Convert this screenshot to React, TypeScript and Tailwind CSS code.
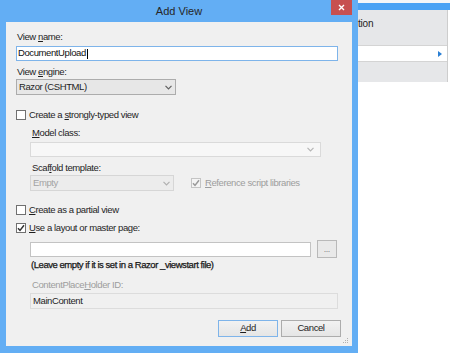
import React from 'react';

const font = { fontFamily: '"Liberation Sans", Arial, sans-serif' };

function Check({ checked = false, disabled = false }: { checked?: boolean; disabled?: boolean }) {
  return (
    <span
      className={`w-[10px] h-[10px] shrink-0 border flex items-center justify-center ${
        disabled ? 'border-[#c4c4c4] bg-[#f4f4f4]' : 'border-[#707070] bg-white'
      }`}
    >
      {checked && (
        <svg width="8" height="8" viewBox="0 0 8 8">
          <path d="M1 4.2 L3 6.4 L7 1.2" fill="none" stroke={disabled ? '#9a9a9a' : '#333'} strokeWidth="1.5" />
        </svg>
      )}
    </span>
  );
}

function Chevron({ color = '#606060' }: { color?: string }) {
  return (
    <svg width="7" height="5" viewBox="0 0 7 5" className="shrink-0">
      <path d="M0.5 0.8 L3.5 3.8 L6.5 0.8" fill="none" stroke={color} strokeWidth="1.2" />
    </svg>
  );
}

function Label({ children, muted = false, className = '' }: { children: React.ReactNode; muted?: boolean; className?: string }) {
  return (
    <div className={`h-[12px] leading-[12px] text-[9.5px] tracking-[-0.4px] whitespace-nowrap ${muted ? 'text-[#9d9d9d]' : 'text-[#1e1e1e]'} ${className}`}>
      {children}
    </div>
  );
}

export default function App() {
  return (
    <div className="w-[450px] h-[353px] flex bg-white overflow-hidden" style={font}>
      {/* dialog window */}
      <div className="w-[358px] h-[353px] shrink-0 bg-[#63aef4] flex flex-col">
        <div className="h-[22px] relative flex items-center justify-center">
          <span className="text-[11px] text-[#262626] leading-none">Add View</span>
          <div className="absolute right-[6px] top-0 w-[21px] h-[15px] bg-[#c75050] flex items-center justify-center">
            <svg width="7" height="7" viewBox="0 0 7 7">
              <path d="M1 1 L6 6 M6 1 L1 6" stroke="#fff" strokeWidth="1.4" />
            </svg>
          </div>
        </div>

        <div className="mx-[6px] h-[324px] bg-[#f0f0f0] pl-[10px] pt-[9px] flex flex-col relative">
          <Label className="pl-[1px]">View <u className="underline-offset-1">n</u>ame:</Label>
          <div className="mt-[3px] w-[322px] h-[15px] bg-white border border-[#7eb4ea] flex items-center pl-[1px] text-[9.5px] tracking-[-0.4px] text-[#111]">
            DocumentUpload<span className="w-px h-[10px] bg-black ml-[1px]" />
          </div>

          <Label className="mt-[5px] pl-[1px]">View <u className="underline-offset-1">e</u>ngine:</Label>
          <div className="mt-[1px] w-[160px] h-[16px] bg-[#e7e7e7] border border-[#acacac] flex items-center justify-between pl-[2px] pr-[3px] text-[9.5px] tracking-[-0.4px] text-[#1e1e1e]">
            <span>Razor (CSHTML)</span>
            <Chevron />
          </div>

          <div className="mt-[14px] h-[12px] flex items-center gap-[3px]">
            <Check />
            <Label>Create a <u className="underline-offset-1">s</u>trongly-typed view</Label>
          </div>

          <div className="pl-[14px] flex flex-col">
            <Label className="mt-[6px] pl-[2px]"><u className="underline-offset-1">M</u>odel class:</Label>
            <div className="mt-[3px] w-[291px] h-[15px] bg-[#f7f7f7] border border-[#dadada] flex items-center justify-end pr-[3px]">
              <span className="h-full w-[14px] flex items-center justify-center">
                <Chevron color="#b5b5b5" />
              </span>
            </div>

            <Label className="mt-[5px] pl-[2px]">Scaf<u className="underline-offset-1">f</u>old template:</Label>
            <div className="mt-[1px] h-[16px] flex items-center">
              <div className="w-[144px] h-[16px] bg-[#ececec] border border-[#d6d6d6] flex items-center justify-between pl-[2px] pr-[3px] text-[9.5px] tracking-[-0.4px] text-[#a3a3a3]">
                <span>Empty</span>
                <Chevron color="#b0b0b0" />
              </div>
              <div className="ml-[17px] flex items-center gap-[4px]">
                <Check checked disabled />
                <Label muted><u className="underline-offset-1">R</u>eference script libraries</Label>
              </div>
            </div>
          </div>

          <div className="mt-[13px] h-[12px] flex items-center gap-[3px]">
            <Check />
            <Label><u className="underline-offset-1">C</u>reate as a partial view</Label>
          </div>
          <div className="mt-[6px] h-[12px] flex items-center gap-[3px]">
            <Check checked />
            <Label><u className="underline-offset-1">U</u>se a layout or master page:</Label>
          </div>

          <div className="pl-[14px] flex flex-col">
            <div className="mt-[6px] h-[18px] flex items-center">
              <div className="w-[281px] h-[15px] bg-white border border-[#c3c3c3]" />
              <div className="ml-[6px] w-[20px] h-[18px] bg-[#e9e9e9] border border-[#b9b9b9] flex items-end justify-center pb-[4px]">
                <span className="text-[7px] leading-none text-[#444]">...</span>
              </div>
            </div>
            <Label className="mt-[1px] pl-[1px] tracking-[-0.45px] text-[#0c0c0c] [-webkit-text-stroke:0.25px_#0c0c0c]">
              (Leave empty if it is set in a Razor _viewstart file)
            </Label>

            <Label muted className="mt-[8px] pl-[2px]">ContentPlace<u className="underline-offset-1">H</u>older ID:</Label>
            <div className="mt-[2px] w-[308px] h-[16px] bg-[#f0f0f0] border border-[#dcdcdc] flex items-center pl-[2px] text-[9.5px] tracking-[-0.4px] text-[#1e1e1e]">
              MainContent
            </div>
          </div>

          <div className="mt-[11px] flex justify-end gap-[3px] pr-[11px]">
            <div className="w-[60px] h-[17px] bg-gradient-to-b from-[#f2f2f2] to-[#e5e5e5] border border-[#7eb4ea] flex items-center justify-center text-[9.5px] tracking-[-0.4px] text-[#1e1e1e]">
              <span><u className="underline-offset-1">A</u>dd</span>
            </div>
            <div className="w-[60px] h-[17px] bg-gradient-to-b from-[#f2f2f2] to-[#e5e5e5] border border-[#acacac] flex items-center justify-center text-[9.5px] tracking-[-0.4px] text-[#1e1e1e]">
              Cancel
            </div>
          </div>

          {/* size grip */}
          <svg width="6" height="6" viewBox="0 0 6 6" className="absolute right-[3px] bottom-[2px]">
            <rect x="4" y="0" width="1" height="1" fill="#b0b0b0" />
            <rect x="2" y="2" width="1" height="1" fill="#b0b0b0" />
            <rect x="4" y="2" width="1" height="1" fill="#b0b0b0" />
            <rect x="0" y="4" width="1" height="1" fill="#b0b0b0" />
            <rect x="2" y="4" width="1" height="1" fill="#b0b0b0" />
            <rect x="4" y="4" width="1" height="1" fill="#b0b0b0" />
          </svg>
        </div>
      </div>

      {/* window behind the dialog */}
      <div className="flex-1 flex flex-col">
        <div className="h-[3px] bg-[#f4f6f8]" />
        <div className="h-[7px] bg-[#4aa2f4]" />
        <div className="w-[90px] border-r border-[#cdcdcd] flex flex-col">
          <div className="h-[35px] bg-[#e6e7e9] pt-[8px] text-[10px] tracking-[-0.2px] text-[#222] leading-[12px]">tion</div>
          <div className="h-[17px] bg-white border-y border-[#d4d4d4] flex items-center justify-end pr-[5px]">
            <svg width="4" height="6" viewBox="0 0 4 6">
              <path d="M0 0 L4 3 L0 6 Z" fill="#2a7fd4" />
            </svg>
          </div>
          <div className="h-[20px] bg-[#e6e7e9]" />
        </div>
      </div>
    </div>
  );
}
